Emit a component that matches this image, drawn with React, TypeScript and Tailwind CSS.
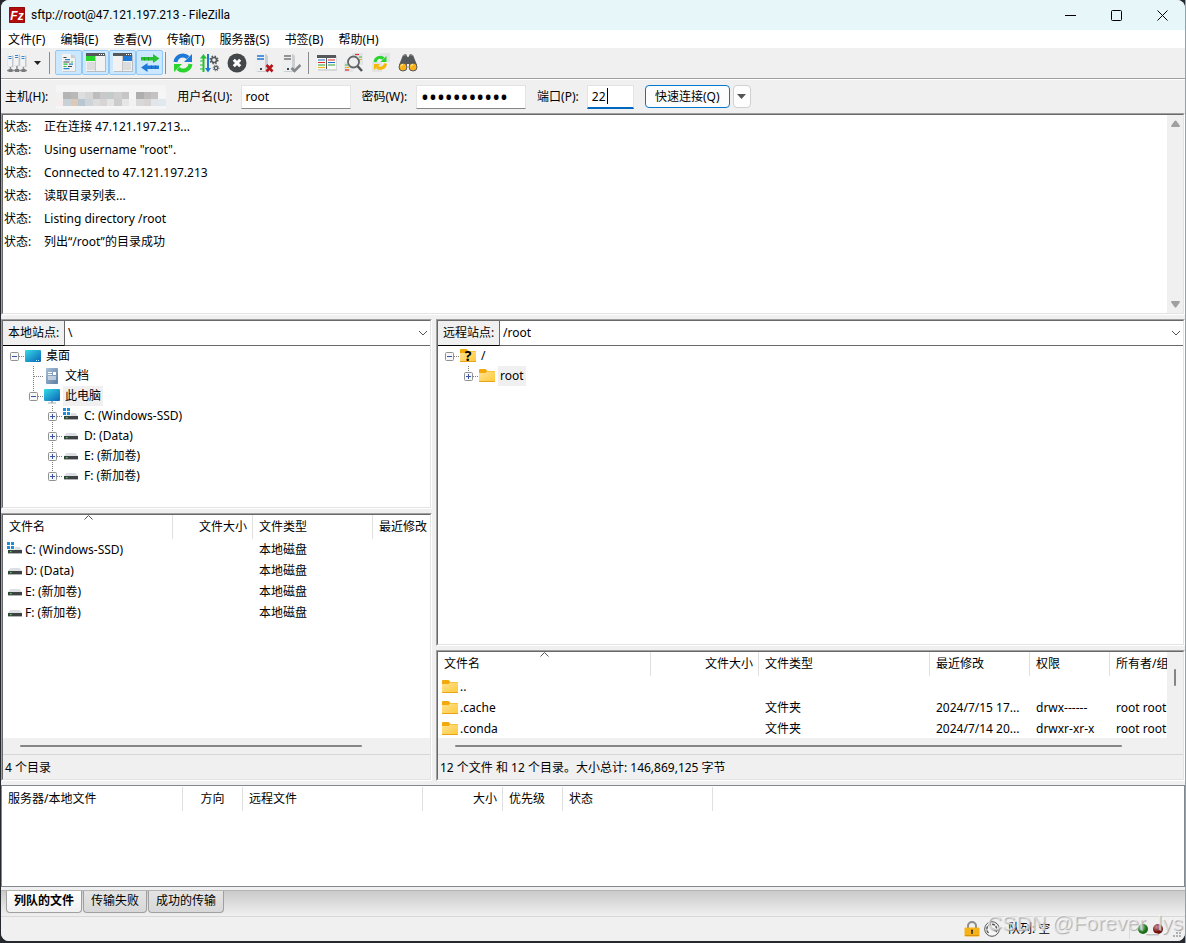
import { ReactNode } from 'react';
import clsx from 'clsx';

const menuItems = ['文件(F)', '编辑(E)', '查看(V)', '传输(T)', '服务器(S)', '书签(B)', '帮助(H)'];

const logLines = [
  '正在连接 47.121.197.213...',
  'Using username "root".',
  'Connected to 47.121.197.213',
  '读取目录列表...',
  'Listing directory /root',
  '列出“/root”的目录成功',
];

const localFiles = [
  { name: 'C: (Windows-SSD)', type: '本地磁盘', system: true },
  { name: 'D: (Data)', type: '本地磁盘' },
  { name: 'E: (新加卷)', type: '本地磁盘' },
  { name: 'F: (新加卷)', type: '本地磁盘' },
];

const remoteFiles = [
  { name: '..', type: '', modified: '', rights: '', owner: '' },
  { name: '.cache', type: '文件夹', modified: '2024/7/15 17...', rights: 'drwx------', owner: 'root root' },
  { name: '.conda', type: '文件夹', modified: '2024/7/14 20...', rights: 'drwxr-xr-x', owner: 'root root' },
];

/* ---------- icons ---------- */

const DriveIcon = ({ system }: { system?: boolean }) => (
  <svg className="h-4 w-4 shrink-0" viewBox="0 0 16 16">
    <path d="M3.500 5h9L15 8H1z" fill="#dcdfe3" />
    <rect x="1" y="8" width="14" height="3" fill="#3f4245" />
    <rect x="1" y="11" width="14" height=".600" fill="#7d8083" />
    <rect x="3" y="9" width="1.500" height="1.200" fill="#4be04b" />
    {system && (
      <g>
        <path d="M0 0h8v7.500H0z" fill="#fff" />
        <path d="M0 0h3v3H0zM4 0h3v3H4zM0 4h3v3H0zM4 4h3v3H4z" fill="#1a8fdc" />
      </g>
    )}
  </svg>
);

const FolderIcon = ({ unknown }: { unknown?: boolean }) => (
  <svg className="h-4 w-4 shrink-0" viewBox="0 0 16 16">
    <defs>
      <linearGradient id="folder" x1="0" y1="0" x2="1" y2="1">
        <stop offset="0" stopColor="#ffe293" />
        <stop offset="1" stopColor="#ffc937" />
      </linearGradient>
    </defs>
    <path d="M0 2a1 1 0 0 1 1-1h5.500l2 2H15a1 1 0 0 1 1 1v4H0z" fill="#f2a90c" />
    <path d="M0 5h6.500L8 3.500h7.500l.5.500V14H0z" fill="url(#folder)" />
    <path d="M0 13h16v.500l-.500.500H.500L0 13.500z" fill="#e9a31a" />
    {unknown && (
      <text x="8" y="13" textAnchor="middle" fontSize="14" fontWeight="700" fontFamily="Noto Sans, sans-serif">
        ?
      </text>
    )}
  </svg>
);

const ScreenIcon = ({ stand }: { stand?: boolean }) => (
  <svg className="h-4 w-4 shrink-0" viewBox="0 0 16 16">
    <defs>
      <linearGradient id="screen" x1="0" y1="0" x2="1" y2="1">
        <stop offset="0" stopColor="#35dbe6" />
        <stop offset="1" stopColor="#0a63b8" />
      </linearGradient>
    </defs>
    {stand ? (
      <>
        <rect x="0" y="1" width="16" height="12" rx="1" fill="url(#screen)" />
        <path d="M7 13h2v1.500h3v1H4v-1h3z" fill="#9fb0bd" />
      </>
    ) : (
      <>
        <rect x="0" y="2" width="16" height="12" rx="1" fill="url(#screen)" />
        <path d="M11 12h1v1h-1zM13 12h1v1h-1z" fill="#bfe6ff" />
      </>
    )}
  </svg>
);

const DocumentIcon = () => (
  <svg className="h-4 w-4 shrink-0" viewBox="0 0 16 16">
    <defs>
      <linearGradient id="doc" x1="0" y1="0" x2="1" y2="1">
        <stop offset="0" stopColor="#a9c0d8" />
        <stop offset="1" stopColor="#5d7ea3" />
      </linearGradient>
    </defs>
    <rect x="2" y="0" width="12" height="16" rx="1" fill="url(#doc)" />
    <path d="M4 4h4v1H4zM4 6h4v1H4zM4 8.500h8v1H4zM4 10.500h8v1H4zM9 4h3v3H9z" fill="#fff" />
  </svg>
);

const Glyph = ({ children }: { children: ReactNode }) => (
  <svg className="h-5 w-5" viewBox="0 0 20 20" fill="none">
    {children}
  </svg>
);

const SiteManagerIcon = () => (
  <Glyph>
    {[0.5, 7, 13.5].map((x, i) => (
      <g key={x} transform={`translate(${x} ${i === 1 ? 0 : 1})`}>
        <path d="M0 1h4.500l1.500 1v11H1.500L0 12z" fill="#c4c7c9" />
        <path d="M0 1h4.500v11.500H0z" fill="#f2f3f4" />
        <path d="M1 2.500h3M1 4.500h3" stroke="#2e84d3" />
        <path d="M3 13v3" stroke="#8d9194" strokeWidth="1.500" />
      </g>
    ))}
    <path d="M0 17.500h20" stroke="#8b8f92" strokeWidth="1.500" />
    <path d="M1.500 16h4v3h-4zM8 16h4v3H8zM14.500 16h4v3h-4z" fill="#777b7e" />
  </Glyph>
);

const LogIcon = () => (
  <Glyph>
    <path d="M4 2h11l2 3v14H4z" fill="#c9cccf" />
    <path d="M3 1h9l4 4v13H3z" fill="#f1f2f3" />
    <path d="M12 1v4h4z" fill="#c8cacc" />
    <path d="M4.500 4.500h3M4.500 9h6M9 13.500h4" stroke="#45484b" strokeWidth="1.200" />
    <path d="M6 6.700h5M10 11.200h4M4.500 15.700h6" stroke="#2e84d3" strokeWidth="1.200" />
    <path d="M4.500 11.200h4M12 9h2M4.500 13.500h3" stroke="#27c13c" strokeWidth="1.200" />
  </Glyph>
);

const PaneIcon = ({ remote }: { remote?: boolean }) => (
  <Glyph>
    <rect x="1" y="2" width="19" height="17" fill="#b5bcc2" />
    <rect x="0" y="1" width="19" height="17" fill="#f2f2f2" />
    <rect x="0" y="0" width="19" height="3" fill="#55585b" />
    <path d="M13 1.500h1M15 1.500h1M17 1.500h1" stroke="#fff" />
    {remote ? (
      <>
        <path d="M10 3h9v5h-9z" fill="#1e7ad6" />
        <path d="M10 9h8v8h-8z" fill="#dcdcdc" />
      </>
    ) : (
      <>
        <path d="M0 3h9v5H0z" fill="#27d52c" />
        <path d="M1 9h8v8H1z" fill="#dcdcdc" />
      </>
    )}
    <path d="M9.500 3v15" stroke="#c4c6c8" />
  </Glyph>
);

const QueueIcon = () => (
  <Glyph>
    <path d="M1 4h12V1l6.500 4.500L13 10V7.500H1z" fill="#27c12f" />
    <path d="M19 12.500H7.500V10L1 14.500 7.500 19v-3H19z" fill="#1e7ad6" />
    <path d="M4.500 4v3.500M8.500 4v3.500" stroke="#1fa526" />
    <path d="M11.500 12.500V16M15.500 12.500V16" stroke="#1868b8" />
  </Glyph>
);

const RefreshIcon = () => (
  <Glyph>
    <path d="M2.500 9A7.500 7.500 0 0 1 15 4.500" stroke="#1e7ad6" strokeWidth="4" />
    <path d="M19 1v8h-8z" fill="#1e7ad6" />
    <path d="M17.500 11A7.500 7.500 0 0 1 5 15.500" stroke="#27d52c" strokeWidth="4" />
    <path d="M1 19v-8h8z" fill="#27d52c" />
  </Glyph>
);

const ProcessIcon = () => (
  <Glyph>
    <path d="M3.500 19V5" stroke="#27c12f" strokeWidth="2" />
    <path d="M3.500 1L7 5.500H0z" fill="#27c12f" />
    <path d="M8 1v14" stroke="#1e7ad6" strokeWidth="2" />
    <path d="M8 19.500l3-4.500H5z" fill="#1e7ad6" />
    <path d="M0 8h3M0 12h3M0 16h3" stroke="#27c12f" />
    <circle cx="14" cy="7" r="2.500" stroke="#55585b" strokeWidth="1.500" />
    <circle cx="14" cy="7" r="3.800" stroke="#55585b" strokeWidth="1.500" strokeDasharray="1.500 1.500" />
    <circle cx="16" cy="15" r="1.700" stroke="#55585b" strokeWidth="1.200" />
    <circle cx="16" cy="15" r="2.800" stroke="#55585b" strokeDasharray="1.200 1" />
  </Glyph>
);

const CancelIcon = () => (
  <Glyph>
    <circle cx="10" cy="10" r="9.500" fill="#45484a" />
    <path d="M6.800 6.800l6.400 6.400M13.200 6.800l-6.400 6.400" stroke="#fff" strokeWidth="3" />
  </Glyph>
);

const ServerStateIcon = ({ off }: { off?: boolean }) => (
  <Glyph>
    <path d="M2 1h10l2 2v16H4l-2-1z" fill="#cccfd1" />
    <path d="M1 1h10v17H1z" fill="#eceeef" />
    <path d="M3 3h7M3 6h7" stroke={off ? '#1e7ad6' : '#777'} strokeWidth="1.500" />
    <path d="M6 15h2v2H6z" fill="#444" />
    {off ? (
      <path d="M12.500 12l6 6.500M18.500 12l-6 6.500" stroke="#b5161c" strokeWidth="2.600" />
    ) : (
      <path d="M10.500 15l3 3 6-6" stroke="#85888a" strokeWidth="2.600" />
    )}
  </Glyph>
);

const FilterIcon = () => (
  <Glyph>
    <rect x="1" y="3" width="19" height="15" fill="#d6d8da" />
    <rect x="0" y="3" width="19" height="13" fill="#fbfbfb" />
    <rect x="0" y="2" width="19" height="3" fill="#55585b" />
    <path d="M1 7h7M11 9.500h7" stroke="#1e6fc4" strokeWidth="1.200" />
    <path d="M1 9.500h7M11 7h7" stroke="#e02b2b" strokeWidth="1.200" />
    <path d="M1 12h7M11 12h7" stroke="#27a12f" strokeWidth="1.200" />
    <path d="M1 14.500h7" stroke="#f0b51a" strokeWidth="1.200" />
    <path d="M9.500 2v14" stroke="#55585b" />
  </Glyph>
);

const CompareIcon = () => (
  <Glyph>
    <path d="M8 0h11v12H8zM0 9h9v10H0z" fill="#e3e4e5" />
    <path d="M11 1.500h4" stroke="#e02b2b" strokeWidth="1.200" />
    <path d="M15 4h3M1 12h3" stroke="#27c12f" strokeWidth="1.200" />
    <path d="M15 6.500h3M1 14.500h4" stroke="#f0b51a" strokeWidth="1.200" />
    <path d="M1 17h4" stroke="#e02b2b" strokeWidth="1.200" />
    <circle cx="9.500" cy="9" r="5.500" fill="#eeeeee" stroke="#63676a" strokeWidth="1.800" />
    <path d="M13.500 13l4.500 5" stroke="#55585b" strokeWidth="2.600" />
  </Glyph>
);

const SyncIcon = () => (
  <Glyph>
    <path d="M9 0h10v9H9zM1 9h10v10H1z" fill="#e1e3e4" />
    <path d="M4 9a5.200 5.200 0 0 1 8.500-3.500" stroke="#27d52c" strokeWidth="3" />
    <path d="M15.500 3v6H9.500z" fill="#27d52c" />
    <path d="M14.500 10.500a5.200 5.200 0 0 1-8.500 3.500" stroke="#f7b800" strokeWidth="3" />
    <path d="M3 17v-6h6z" fill="#f7b800" />
  </Glyph>
);

const FindIcon = () => (
  <Glyph>
    <path d="M5 2l3-1 1.500 3h1L12 1l3 1 4 10v3h-7l-1-4H9l-1 4H1v-3z" fill="#55585a" />
    <path d="M5 2.500l3-.500M12 2l3 .500" stroke="#888" />
    <circle cx="5" cy="14" r="4" fill="#f7b21a" stroke="#55585a" />
    <circle cx="15" cy="14" r="4" fill="#f7b21a" stroke="#55585a" />
    <path d="M3 13.500a2 2 0 0 1 2-2M13 13.500a2 2 0 0 1 2-2" stroke="#fff0bf" />
  </Glyph>
);

/* ---------- shared pieces ---------- */

const Sunken = ({ className, children }: { className?: string; children: ReactNode }) => (
  <div className={clsx('flex min-h-0 border border-t-[#a0a0a0] border-r-white border-b-white border-l-[#a0a0a0]', className)}>
    <div className="flex min-h-0 min-w-0 flex-1 flex-col border border-t-[#696969] border-r-[#e3e3e3] border-b-[#e3e3e3] border-l-[#696969] bg-white">
      {children}
    </div>
  </div>
);

const ToolButton = ({ label, active, children }: { label: string; active?: boolean; children: ReactNode }) => (
  <button
    aria-label={label}
    aria-pressed={active}
    className={clsx(
      'flex h-[25px] w-[27px] items-center justify-center',
      active && 'rounded-xs border border-[#92c8f5] bg-[#cce8ff]'
    )}
  >
    {children}
  </button>
);

const Separator = ({ className }: { className: string }) => <span className={clsx('h-[22px] w-px bg-[#8c8c8c]', className)} />;

const SitePicker = ({ id, label, path }: { id: string; label: string; path: string }) => (
  <div className="flex h-[25px] shrink-0">
    <label
      htmlFor={id}
      className="flex w-[62px] shrink-0 items-center border-r border-b border-r-[#696969] border-b-black bg-[#f0f0f0] pl-[5px] whitespace-nowrap"
    >
      {label}
    </label>
    <div className="relative min-w-0 flex-1 border-b border-[#696969]">
      <select id={id} defaultValue={path} className="h-full w-full appearance-none bg-white pl-[3px] outline-none">
        <option value={path}>{path}</option>
      </select>
      <svg className="pointer-events-none absolute top-2 right-[3px] h-2 w-2" viewBox="0 0 8 8" fill="none" stroke="#555">
        <path d="M0 2l4 4 4-4" />
      </svg>
    </div>
  </div>
);

type TreeNodeProps = {
  label: string;
  icon: ReactNode;
  root?: boolean;
  last?: boolean;
  expander?: 'plus' | 'minus';
  selected?: boolean;
  children?: ReactNode;
};

const TreeNode = ({ label, icon, root, last, expander, selected, children }: TreeNodeProps) => (
  <li>
    <div className="flex h-5 items-center">
      <svg className="mr-px h-5 w-[19px] shrink-0" viewBox="0 0 19 20" fill="none">
        <g stroke="#808080" strokeDasharray="1 1">
          {!root && <path d={last ? 'M9.500 0v10' : 'M9.500 0v20'} />}
          <path d="M10 10.500h9" />
        </g>
        {expander && (
          <>
            <rect x="5.500" y="6.500" width="8" height="8" rx="1" fill="#f6f6f6" stroke="#919191" />
            <path d={expander === 'plus' ? 'M7 10.500h5M9.500 8v5' : 'M7 10.500h5'} stroke="#3a55a4" />
          </>
        )}
      </svg>
      {icon}
      <span className={clsx('ml-[3px] px-0.5 leading-5 whitespace-nowrap', selected && 'bg-[#f0f0f0]')}>{label}</span>
    </div>
    {children && <ul className="pl-[19px]">{children}</ul>}
  </li>
);

const HeadCell = ({ children, right, sorted }: { children?: ReactNode; right?: boolean; sorted?: boolean }) => (
  <th
    className={clsx(
      'relative h-6 overflow-hidden border-r border-[#e0e0e0] font-normal whitespace-nowrap',
      right ? 'pr-[5px] text-right' : 'pl-[6px] text-left'
    )}
  >
    {sorted && (
      <svg className="absolute top-0 left-1/2 -ml-1 h-[5px] w-[9px]" viewBox="0 0 9 5" fill="none" stroke="#555">
        <path d="M.500 4.500l4-4 4 4" />
      </svg>
    )}
    {children}
  </th>
);

const HScroll = ({ thumb }: { thumb: string }) => (
  <div className="h-4 shrink-0 bg-[#f0f0f0] pt-[7px] pr-[61px] pl-[17px]">
    <div className={clsx('h-0.5 rounded-full bg-[#858585]', thumb)} />
  </div>
);

const PaneStatus = ({ children }: { children: ReactNode }) => (
  <div className="flex h-[25px] shrink-0 items-center border-t border-[#d5d5d5] bg-[#f0f0f0] pt-0.5 pl-0.5">{children}</div>
);

const fieldClass = 'h-6 w-[110px] border border-[#e3e3e3] border-b-[#868686] bg-white px-1 outline-none';

/* ---------- sections ---------- */

const TitleBar = () => (
  <header className="flex h-[30px] shrink-0 items-center bg-[#e7f6f8] pl-2">
    <svg className="h-4 w-4" viewBox="0 0 16 16">
      <rect width="16" height="16" rx="1" fill="#b30d0d" />
      <rect x=".500" y=".500" width="15" height="15" fill="none" stroke="#7d0606" strokeDasharray="1 1" />
      <text x="8" y="12.500" textAnchor="middle" fontSize="12" fontWeight="700" fontStyle="italic" fill="#fff" fontFamily="Liberation Sans, sans-serif">
        Fz
      </text>
    </svg>
    <h1 className="ml-1.5 flex-1 font-[Roboto,sans-serif] text-xs">sftp://root@47.121.197.213 - FileZilla</h1>
    <button aria-label="最小化" className="flex h-full w-[46px] items-center justify-center">
      <svg className="h-[11px] w-[11px]" viewBox="0 0 11 11" fill="none" stroke="#000">
        <path d="M0 5.500h11" />
      </svg>
    </button>
    <button aria-label="最大化" className="flex h-full w-[46px] items-center justify-center">
      <svg className="h-[11px] w-[11px]" viewBox="0 0 11 11" fill="none" stroke="#000">
        <rect x=".500" y=".500" width="10" height="10" rx="1" />
      </svg>
    </button>
    <button aria-label="关闭" className="flex h-full w-[46px] items-center justify-center">
      <svg className="h-[11px] w-[11px]" viewBox="0 0 11 11" fill="none" stroke="#000">
        <path d="M.500.500l10 10M10.500.500l-10 10" />
      </svg>
    </button>
  </header>
);

const Toolbar = () => (
  <div className="flex h-8 shrink-0 items-start border-b border-white bg-[#f0f0f0] pt-0.5 pl-0.5 shadow-[inset_0_-1px_0_#a0a0a0]">
    <ToolButton label="站点管理器">
      <SiteManagerIcon />
    </ToolButton>
    <button aria-label="站点列表" className="flex h-[25px] w-[14px] items-center justify-center">
      <svg className="h-1 w-[7px]" viewBox="0 0 7 4">
        <path d="M0 0h7L3.500 4z" fill="#222" />
      </svg>
    </button>
    <Separator className="mx-[5px] mt-0.5" />
    <ToolButton label="消息日志" active>
      <LogIcon />
    </ToolButton>
    <ToolButton label="本地目录树" active>
      <PaneIcon />
    </ToolButton>
    <ToolButton label="远程目录树" active>
      <PaneIcon remote />
    </ToolButton>
    <ToolButton label="传输队列" active>
      <QueueIcon />
    </ToolButton>
    <Separator className="mt-0.5 mr-[3px] ml-0.5" />
    <ToolButton label="刷新">
      <RefreshIcon />
    </ToolButton>
    <ToolButton label="处理队列">
      <ProcessIcon />
    </ToolButton>
    <ToolButton label="取消">
      <CancelIcon />
    </ToolButton>
    <ToolButton label="断开">
      <ServerStateIcon off />
    </ToolButton>
    <ToolButton label="重新连接">
      <ServerStateIcon />
    </ToolButton>
    <Separator className="mx-1 mt-0.5" />
    <ToolButton label="过滤器">
      <FilterIcon />
    </ToolButton>
    <ToolButton label="目录对比">
      <CompareIcon />
    </ToolButton>
    <ToolButton label="同步浏览">
      <SyncIcon />
    </ToolButton>
    <ToolButton label="查找">
      <FindIcon />
    </ToolButton>
  </div>
);

const mosaic = [
  ['#f1f1f1', '#b4b4b4', '#b9b9b9', '#dedede', '#d6d6d6', '#bdbdbd', '#c9c9c9', '#c4cbcb', '#cfcfcf', '#c6c6c6', '#f5f5f5', '#aeaeae', '#bcbcbc', '#c6c2c2', '#f6f6f6'],
  ['#f6eeee', '#c9d0d6', '#dcc9b8', '#b9c7d3', '#cfd4d8', '#dcdcdc', '#d9d4d4', '#e4e4e4', '#cccccc', '#e6e6e6', '#f2f2f2', '#d8d8d8', '#d6d3d3', '#e2e6ea', '#dfe9ee'],
];

const QuickConnect = () => (
  <form className="flex h-[33px] shrink-0 items-center gap-[11px] bg-[#f0f0f0] pl-1">
    <div className="flex items-center gap-2">
      <label htmlFor="host">主机(H):</label>
      <div className="relative">
        <input id="host" className="h-6 w-[110px] bg-[#f5f5f5] px-1 outline-none" />
        <svg className="pointer-events-none absolute top-[7px] left-0 h-[14px] w-[110px]" viewBox="0 0 110 14" shapeRendering="crispEdges">
          {mosaic.map((row, y) =>
            row.map((color, x) => <rect key={`${x}-${y}`} x={x * 7.3} y={y * 7} width="8" height="7" fill={color} />)
          )}
        </svg>
      </div>
    </div>
    <div className="flex items-center gap-2">
      <label htmlFor="user">用户名(U):</label>
      <input id="user" defaultValue="root" className={fieldClass} />
    </div>
    <div className="flex items-center gap-[9px]">
      <label htmlFor="pass">密码(W):</label>
      <input id="pass" type="password" defaultValue="abcdefghijk" className={clsx(fieldClass, 'text-[21px]')} />
    </div>
    <div className="flex items-center gap-2">
      <label htmlFor="port">端口(P):</label>
      <div className="relative">
        <input
          id="port"
          defaultValue="22"
          className="h-6 w-[47px] border border-b-2 border-[#e3e3e3] border-b-[#0067c0] bg-white px-1 outline-none"
        />
        <span className="pointer-events-none absolute top-[3px] left-5 h-4 w-px bg-black" />
      </div>
    </div>
    <div className="flex items-center gap-[3px]">
      <button type="button" className="h-[23px] w-[85px] rounded border border-[#0078d4] bg-[#fdfdfd] whitespace-nowrap">
        快速连接(Q)
      </button>
      <button
        type="button"
        aria-label="历史记录"
        className="flex h-[23px] w-[18px] items-center justify-center rounded border border-[#d0d0d0] bg-[#fdfdfd]"
      >
        <svg className="h-[5px] w-[9px]" viewBox="0 0 9 5">
          <path d="M0 0h9L4.500 5z" fill="#555" />
        </svg>
      </button>
    </div>
  </form>
);

const MessageLog = () => (
  <Sunken className="h-[202px] shrink-0">
    <div className="flex min-h-0 flex-1">
      <ul className="flex-1 pl-px">
        {logLines.map((line) => (
          <li key={line} className="flex h-[23px] items-center">
            <span className="w-10">状态:</span>
            <span>{line}</span>
          </li>
        ))}
      </ul>
      <div className="flex w-4 flex-col items-center justify-between bg-[#f0f0f0] py-[5px]">
        <svg className="h-[7px] w-[9px]" viewBox="0 0 9 7">
          <path d="M3.500 1q1-1 2 0L9 6q0 1-1 1H1Q0 7 0 6z" fill="#a0a0a0" />
        </svg>
        <svg className="h-[7px] w-[9px]" viewBox="0 0 9 7">
          <path d="M3.500 6q1 1 2 0L9 1q0-1-1-1H1Q0 0 0 1z" fill="#a0a0a0" />
        </svg>
      </div>
    </div>
  </Sunken>
);

const LocalPane = () => (
  <section className="flex min-w-0 flex-col gap-1">
    <Sunken className="flex-1">
      <SitePicker id="local-site" label="本地站点:" path="\" />
      <ul className="pl-0.5">
        <TreeNode label="桌面" icon={<ScreenIcon />} root expander="minus">
          <TreeNode label="文档" icon={<DocumentIcon />} />
          <TreeNode label="此电脑" icon={<ScreenIcon stand />} last expander="minus" selected>
            {localFiles.map((drive, i) => (
              <TreeNode
                key={drive.name}
                label={drive.name}
                icon={<DriveIcon system={drive.system} />}
                last={i === localFiles.length - 1}
                expander="plus"
              />
            ))}
          </TreeNode>
        </TreeNode>
      </ul>
    </Sunken>
    <Sunken className="h-[268px] shrink-0">
      <div className="min-h-0 flex-1 overflow-hidden">
        <table className="w-[470px] table-fixed border-separate border-spacing-0">
          <colgroup>
            <col className="w-[170px]" />
            <col className="w-20" />
            <col className="w-[120px]" />
            <col className="w-[100px]" />
          </colgroup>
          <thead>
            <tr>
              <HeadCell sorted>文件名</HeadCell>
              <HeadCell right>文件大小</HeadCell>
              <HeadCell>文件类型</HeadCell>
              <HeadCell>最近修改</HeadCell>
            </tr>
          </thead>
          <tbody>
            {localFiles.map((file) => (
              <tr key={file.name} className="h-[21px]">
                <td className="pl-1">
                  <div className="flex items-center gap-0.5">
                    <DriveIcon system={file.system} />
                    {file.name}
                  </div>
                </td>
                <td />
                <td className="pl-[6px]">{file.type}</td>
                <td />
              </tr>
            ))}
          </tbody>
        </table>
      </div>
      <HScroll thumb="w-[342px]" />
      <PaneStatus>4 个目录</PaneStatus>
    </Sunken>
  </section>
);

const RemotePane = () => (
  <section className="flex min-w-0 flex-col gap-1">
    <Sunken className="flex-1">
      <SitePicker id="remote-site" label="远程站点:" path="/root" />
      <ul className="pl-0.5">
        <TreeNode label="/" icon={<FolderIcon unknown />} root expander="minus">
          <TreeNode label="root" icon={<FolderIcon />} last expander="plus" selected />
        </TreeNode>
      </ul>
    </Sunken>
    <Sunken className="h-[131px] shrink-0">
      <div className="flex min-h-0 flex-1">
        <div className="min-w-0 flex-1 overflow-hidden">
          <table className="w-[772px] table-fixed border-separate border-spacing-0">
            <colgroup>
              <col className="w-[213px]" />
              <col className="w-[108px]" />
              <col className="w-[171px]" />
              <col className="w-[100px]" />
              <col className="w-20" />
              <col className="w-[100px]" />
            </colgroup>
            <thead>
              <tr>
                <HeadCell sorted>文件名</HeadCell>
                <HeadCell right>文件大小</HeadCell>
                <HeadCell>文件类型</HeadCell>
                <HeadCell>最近修改</HeadCell>
                <HeadCell>权限</HeadCell>
                <HeadCell>所有者/组</HeadCell>
              </tr>
            </thead>
            <tbody>
              {remoteFiles.map((file) => (
                <tr key={file.name} className="h-[21px] whitespace-nowrap">
                  <td className="pl-1">
                    <div className="flex items-center gap-0.5">
                      <FolderIcon />
                      {file.name}
                    </div>
                  </td>
                  <td />
                  <td className="pl-[6px]">{file.type}</td>
                  <td className="pl-[6px]">{file.modified}</td>
                  <td className="pl-[6px]">{file.rights}</td>
                  <td className="pl-[6px]">{file.owner}</td>
                </tr>
              ))}
            </tbody>
          </table>
        </div>
        <div className="flex w-4 shrink-0 justify-center bg-[#f0f0f0] pt-[17px]">
          <div className="h-[17px] w-0.5 rounded-full bg-[#858585]" />
        </div>
      </div>
      <HScroll thumb="w-full" />
      <PaneStatus>12 个文件 和 12 个目录。大小总计: 146,869,125 字节</PaneStatus>
    </Sunken>
  </section>
);

const QueuePane = () => (
  <section className="h-[102px] shrink-0 overflow-hidden border border-[#828790] bg-white pt-px">
    <table className="w-[711px] table-fixed border-separate border-spacing-0">
      <colgroup>
        <col className="w-[181px]" />
        <col className="w-[60px]" />
        <col className="w-[180px]" />
        <col className="w-20" />
        <col className="w-[60px]" />
        <col className="w-[150px]" />
      </colgroup>
      <thead>
        <tr>
          <HeadCell>服务器/本地文件</HeadCell>
          <th className="border-r border-[#e0e0e0] text-center font-normal">方向</th>
          <HeadCell>远程文件</HeadCell>
          <HeadCell right>大小</HeadCell>
          <HeadCell>优先级</HeadCell>
          <HeadCell>状态</HeadCell>
        </tr>
      </thead>
    </table>
  </section>
);

const tabs = [
  { label: '列队的文件', active: true },
  { label: '传输失败' },
  { label: '成功的传输' },
];

const QueueTabs = () => (
  <div
    role="tablist"
    className="mt-[3px] flex h-[26px] shrink-0 items-start gap-px border-t border-[#b4b4b4] bg-linear-to-b from-[#cacaca] to-[#f0f0f0] pl-[5px]"
  >
    {tabs.map((tab) => (
      <button
        key={tab.label}
        role="tab"
        aria-selected={!!tab.active}
        className={clsx(
          'flex h-[22px] items-center rounded-b border border-t-0 border-[#a0a0a0] px-[7px] pb-0.5 whitespace-nowrap',
          tab.active ? 'bg-linear-to-b from-white to-[#f0f0f0] font-bold' : 'bg-linear-to-b from-[#e4e4e4] to-[#d8d8d8]'
        )}
      >
        {tab.label}
      </button>
    ))}
  </div>
);

const StatusBar = () => (
  <footer className="relative flex h-[25px] shrink-0 items-center border-t border-[#d8d8d8] bg-[#f0f0f0] pr-[22px]">
    <div className="ml-auto flex items-center gap-1">
      <svg className="h-4 w-4" viewBox="0 0 16 16" fill="none">
        <path d="M4 8V5a4 4 0 0 1 8 0v3" stroke="#8b8b8b" strokeWidth="2" />
        <rect x=".500" y="6.500" width="15" height="9" rx="1" fill="#f7b21a" />
        <path d="M1 14.500h14" stroke="#d8920d" />
        <path d="M8 9v4M7 9.500h2" stroke="#333" strokeWidth="1.500" />
      </svg>
      <svg className="h-4 w-4" viewBox="0 0 16 16" fill="none" stroke="#555">
        <circle cx="8" cy="8" r="7.300" fill="#f5f5f5" />
        <path d="M4.500 12A5 5 0 1 1 12 11" strokeWidth="1.500" strokeDasharray="3 1" />
        <path d="M8 8l4 1M10 9.500l2.500-.500" strokeWidth="1.500" />
      </svg>
      <span className="ml-1 w-[45px] whitespace-nowrap">队列: 空</span>
    </div>
    <span className="ml-[76px] h-5 w-px bg-[#dadada]" />
    <div className="ml-2 flex gap-[5px]">
      <span className="h-2.5 w-2.5 rounded-full bg-radial-[at_35%_30%] from-[#9fd09f] via-[#1f7a1f] to-[#0c4a0c]" />
      <span className="h-2.5 w-2.5 rounded-full bg-radial-[at_35%_30%] from-[#c79090] via-[#7a1010] to-[#4a0606]" />
    </div>
    <svg className="absolute right-1 bottom-1 h-2 w-2" viewBox="0 0 8 8" fill="#b0b0b0">
      <path d="M6 0h2v2H6zM3 3h2v2H3zM6 3h2v2H6zM0 6h2v2H0zM3 6h2v2H3zM6 6h2v2H6z" />
    </svg>
    <span className="pointer-events-none absolute right-0.5 bottom-1 font-['Liberation_Sans',sans-serif] text-[21px] whitespace-nowrap text-white/50 [text-shadow:1px_1px_1px_#a8a8a8]">
      CSDN @Forever_lys
    </span>
  </footer>
);

export default function App() {
  return (
    <div className="flex h-screen border-r border-[#8fa3ad] bg-[#25282c] pb-0.5 pl-px font-['Noto_Sans','Noto_Sans_CJK_SC',sans-serif] text-xs text-black">
      <main className="flex min-w-0 flex-1 flex-col overflow-hidden rounded-lg bg-[#f0f0f0]">
        <TitleBar />
        <nav className="flex h-[18px] shrink-0 items-center gap-[15px] bg-white pt-0.5 pl-[7px]">
          {menuItems.map((item) => (
            <button key={item} className="whitespace-nowrap">
              {item}
            </button>
          ))}
        </nav>
        <Toolbar />
        <QuickConnect />
        <MessageLog />
        <div className="my-1 grid min-h-0 flex-1 grid-cols-[431fr_749fr] grid-rows-[minmax(0,1fr)] gap-1">
          <LocalPane />
          <RemotePane />
        </div>
        <QueuePane />
        <QueueTabs />
        <StatusBar />
      </main>
    </div>
  );
}
